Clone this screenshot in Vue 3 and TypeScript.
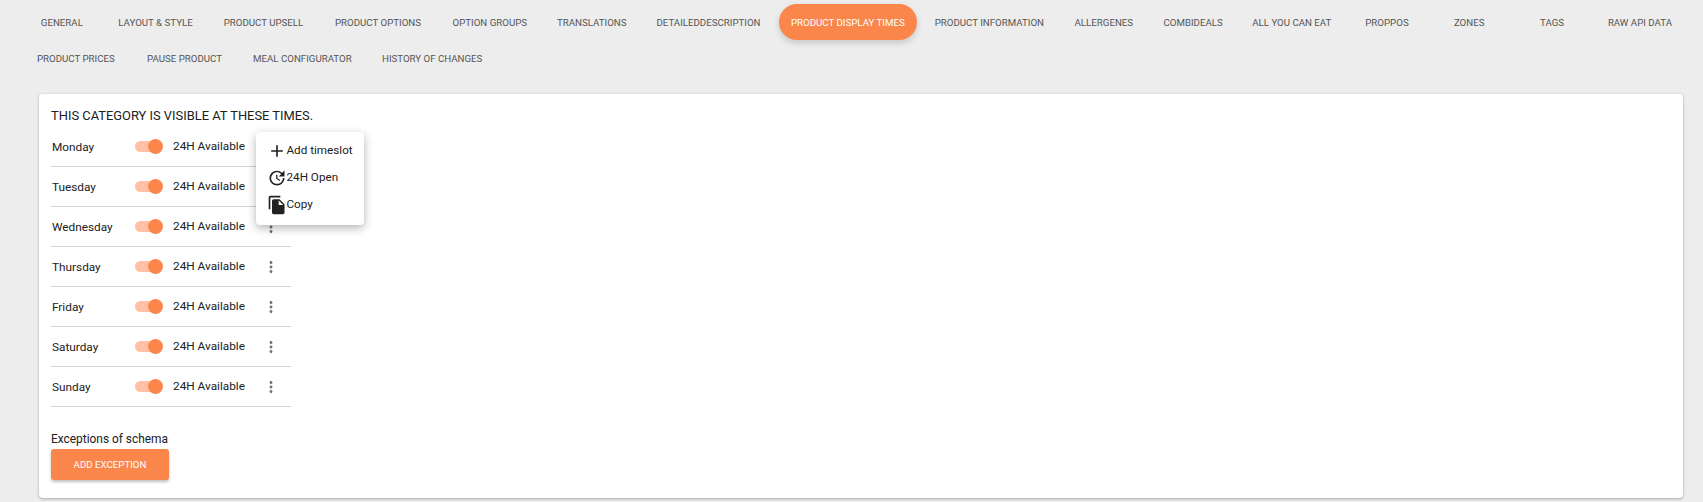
<script setup lang="ts">
interface Tab {
  label: string
  width: number
}

const tabRows: Tab[][] = [
  [
    { label: 'General', width: 76.3 },
    { label: 'Layout & Style', width: 99 },
    { label: 'Product Upsell', width: 105 },
    { label: 'Product Options', width: 112 },
    { label: 'Option Groups', width: 99.6 },
    { label: 'Translations', width: 92.4 },
    { label: 'DetailedDescription', width: 129 },
    { label: 'Product Display Times', width: 137.7 },
    { label: 'Product Information', width: 133.3 },
    { label: 'Allergenes', width: 83.7 },
    { label: 'Combideals', width: 83 },
    { label: 'All you can eat', width: 102.3 },
    { label: 'Proppos', width: 76 },
    { label: 'Zones', width: 76.5 },
    { label: 'Tags', width: 77.2 },
    { label: 'Raw API data', width: 86.6 },
  ],
  [
    { label: 'Product prices', width: 104.3 },
    { label: 'Pause product', width: 101 },
    { label: 'Meal configurator', width: 122.7 },
    { label: 'History of changes', width: 125 },
  ],
]
const activeTab = 'Product Display Times'
const days = ['Monday', 'Tuesday', 'Wednesday', 'Thursday', 'Friday', 'Saturday', 'Sunday']
</script>

<template>
  <div class="page">
    <nav class="tabs">
      <div v-for="(row, i) in tabRows" :key="i" class="tab-row">
        <button
          v-for="tab in row"
          :key="tab.label"
          class="tab"
          :class="{ active: tab.label === activeTab }"
          :style="{ width: tab.width + 'px' }"
        >{{ tab.label }}</button>
      </div>
    </nav>

    <section class="card">
      <h2 class="title">This category is visible at these times.</h2>

      <div class="days">
        <div v-for="day in days" :key="day" class="day">
          <span class="day-name">{{ day }}</span>
          <span class="switch"><span class="thumb"></span></span>
          <span class="avail">24H Available</span>
          <svg class="more" viewBox="0 0 24 24"><path d="M12 8c1.1 0 2-.9 2-2s-.9-2-2-2-2 .9-2 2 .9 2 2 2zm0 2c-1.1 0-2 .9-2 2s.9 2 2 2 2-.9 2-2-.9-2-2-2zm0 6c-1.1 0-2 .9-2 2s.9 2 2 2 2-.9 2-2-.9-2-2-2z" /></svg>
        </div>
      </div>

      <p class="exc-label">Exceptions of schema</p>
      <button class="exc-btn">Add exception</button>

      <!-- open row menu -->
      <div class="menu">
        <div class="menu-item">
          <svg viewBox="0 0 24 24"><path d="M19 13h-6v6h-2v-6H5v-2h6V5h2v6h6v2z" /></svg>
          <span>Add timeslot</span>
        </div>
        <div class="menu-item">
          <svg viewBox="0 0 24 24"><path d="M21 10.12h-6.78l2.74-2.82c-2.73-2.7-7.15-2.8-9.88-.1-2.73 2.71-2.73 7.08 0 9.79s7.15 2.71 9.88 0C18.32 15.65 19 14.08 19 12.1h2c0 1.98-.88 4.55-2.64 6.29-3.51 3.48-9.21 3.48-12.72 0-3.5-3.47-3.53-9.11-.02-12.58s9.14-3.47 12.65 0L21 3v7.12zM12.5 8v4.25l3.5 2.08-.72 1.21L11 13V8h1.5z" /></svg>
          <span>24H Open</span>
        </div>
        <div class="menu-item">
          <svg viewBox="0 0 24 24"><path d="M16 1H4c-1.1 0-2 .9-2 2v14h2V3h12V1zm-1 4l6 6v10c0 1.1-.9 2-2 2H7.99C6.89 23 6 22.1 6 21l.01-14c0-1.1.89-2 1.99-2h7zm-1 7h5.5L14 6.5V12z" /></svg>
          <span>Copy</span>
        </div>
      </div>
    </section>
  </div>
</template>

<style>
html, body {
  margin: 0;
  background: #ededed;
}
</style>

<style scoped>
.page {
  height: 502px;
  box-sizing: border-box;
  padding: 4px 20.4px 4px 39px;
  background: #ededed;
  font-family: Roboto, sans-serif;
  color: #212121;
  overflow: hidden;
}
.tabs {
  margin-left: -15.3px;
  height: 90px;
}
.tab-row {
  display: flex;
  gap: 6px;
  height: 36px;
}
.tab {
  flex: none;
  height: 36px;
  padding: 0;
  border: 0;
  border-radius: 18px;
  background: transparent;
  color: #555;
  font: 400 9.7px Roboto, sans-serif;
  text-transform: uppercase;
  white-space: nowrap;
}
.tab.active {
  background: #fb864b;
  color: #fff;
  box-shadow: 0 3px 6px rgba(0, 0, 0, 0.16);
}
.card {
  position: relative;
  height: 404px;
  box-sizing: border-box;
  padding: 11px 12px 18px;
  background: #fff;
  border-radius: 4px;
  box-shadow: 0 1px 3px rgba(0, 0, 0, 0.3);
}
.title {
  margin: 0;
  font-size: 12.9px;
  font-weight: 400;
  line-height: 22px;
  text-transform: uppercase;
}
.days {
  width: 240px;
}
.day {
  display: flex;
  align-items: center;
  height: 40px;
  box-sizing: border-box;
  border-bottom: 1px solid #d2d2d2;
  font-size: 11.8px;
}
.day-name {
  width: 84px;
  padding-left: 1px;
  box-sizing: border-box;
  margin-top: 1px;
}
.switch {
  position: relative;
  width: 25px;
  height: 11px;
  border-radius: 6px;
  background: #fdc2a5;
}
.thumb {
  position: absolute;
  top: -2px;
  right: -3px;
  width: 15px;
  height: 15px;
  border-radius: 50%;
  background: #fb864b;
}
.avail {
  margin-left: 13px;
  margin-top: -1px;
  width: 89px;
}
.more {
  width: 18px;
  height: 18px;
  fill: #757575;
}
.exc-label {
  margin: 24px 0 2px;
  font-size: 11.9px;
  line-height: 16px;
}
.exc-btn {
  display: block;
  width: 118px;
  height: 31px;
  padding: 0 0 1px;
  border: 0;
  border-radius: 3px;
  background: #fb864b;
  color: #fff;
  font: 400 9.7px Roboto, sans-serif;
  text-transform: uppercase;
  box-shadow: 0 2px 3px rgba(0, 0, 0, 0.25);
}
.menu {
  position: absolute;
  top: 38px;
  left: 217px;
  width: 108px;
  height: 93px;
  padding-top: 5px;
  box-sizing: border-box;
  background: #fff;
  border-radius: 4px;
  box-shadow: 0 3px 10px rgba(0, 0, 0, 0.3);
}
.menu-item {
  display: flex;
  align-items: center;
  height: 27px;
  padding-left: 10.5px;
  font-size: 11.7px;
}
.menu-item svg {
  width: 20px;
  height: 20px;
  flex: none;
  fill: #212121;
}
.menu-item span {
  margin-top: -1px;
}
</style>
